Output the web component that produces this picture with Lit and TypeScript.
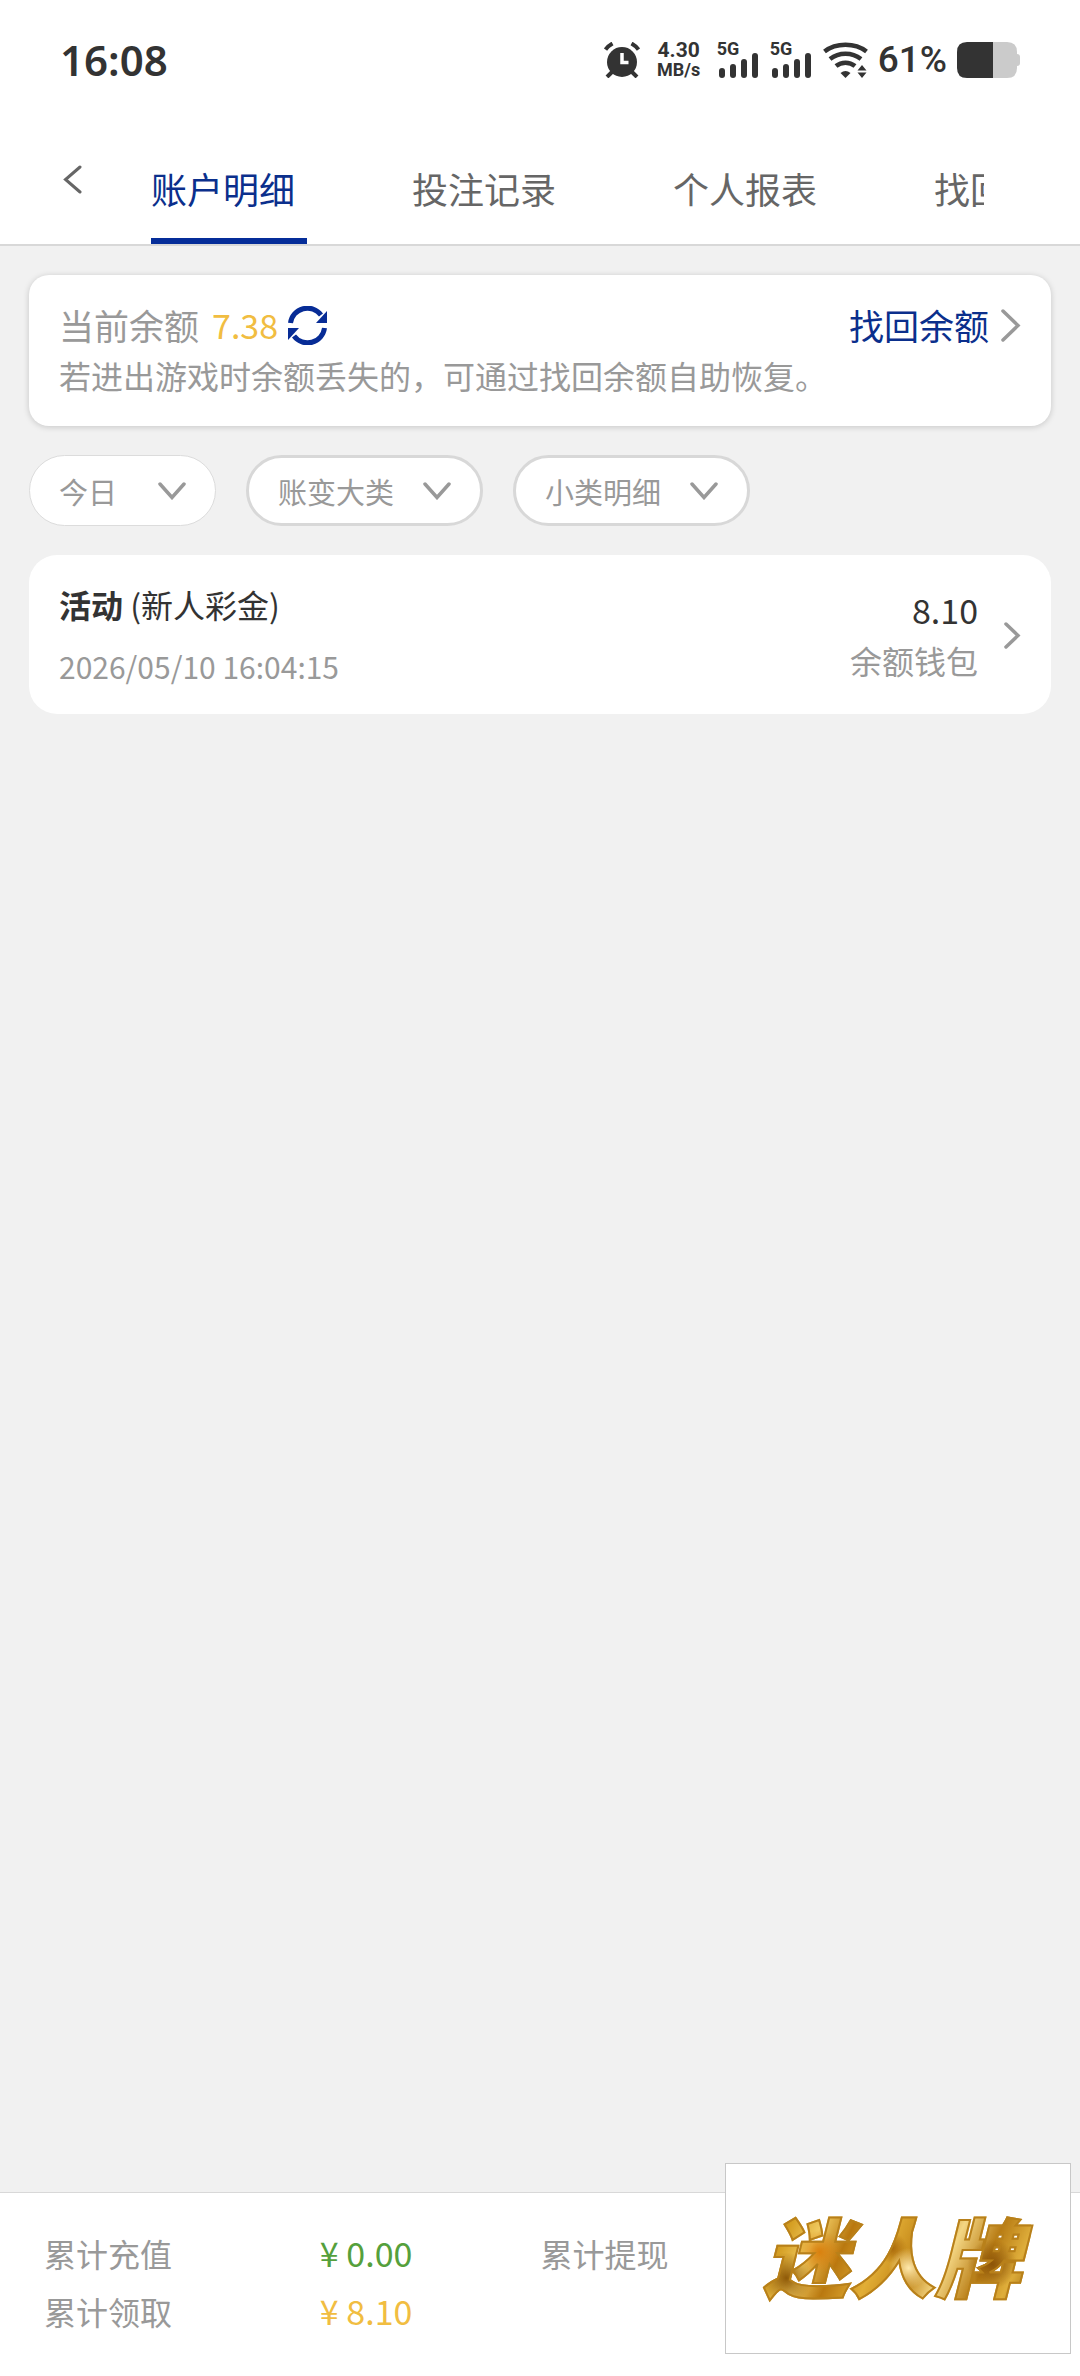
import { LitElement, html, css, svg } from 'lit';
import { customElement, property, state } from 'lit/decorators.js';

interface RecordItem {
  type: string;
  detail: string;
  time: string;
  amount: string;
  wallet: string;
}

const TABS = ['账户明细', '投注记录', '个人报表', '找回余额'];

const RECORDS: RecordItem[] = [
  { type: '活动', detail: '(新人彩金)', time: '2026/05/10 16:04:15', amount: '8.10', wallet: '余额钱包' },
];

const chevronRight = (width: number, height: number) => html`
  <svg width=${width} height=${height} viewBox="0 0 ${width} ${height}" fill="none" aria-hidden="true">
    <path
      d="M2 2L${width - 3} ${height / 2}L2 ${height - 2}"
      stroke="#999"
      stroke-width="3.5"
      stroke-linecap="round"
    />
  </svg>
`;

@customElement('status-bar')
export class StatusBar extends LitElement {
  static styles = css`
    :host {
      display: flex;
      align-items: center;
      justify-content: space-between;
      height: 120px;
      padding: 0 60px;
      background: #fff;
      color: #333;
      font-family: 'Noto Sans', Roboto, sans-serif;
      font-weight: 600;
    }

    svg {
      display: block;
    }

    .time {
      font-size: 42px;
      line-height: 48px;
    }

    .icons {
      display: flex;
      align-items: center;
    }

    .speed {
      display: flex;
      flex-direction: column;
      align-items: center;
      width: 48px;
      margin: 0 14px 0 15px;
      font-family: Roboto, sans-serif;
      font-size: 18px;
      font-weight: 700;
      line-height: 20px;
    }

    .speed__value {
      font-size: 21px;
    }

    .signal {
      display: grid;
      margin-right: 11px;
    }

    .signal > * {
      grid-area: 1 / 1;
    }

    .signal__label {
      font-family: Roboto, sans-serif;
      font-size: 18px;
      font-weight: 700;
      line-height: 14px;
    }

    .percent {
      margin: 0 10px;
      font-family: Roboto, 'Noto Sans', sans-serif;
      font-weight: 500;
      font-size: 37px;
      line-height: 40px;
    }
  `;

  private _signal() {
    return html`
      <span class="signal">
        <span class="signal__label">5G</span>
        <svg width="42" height="36" viewBox="0 0 42 36" fill="#333">
          <rect x="2" y="26" width="6" height="10" rx="3" />
          <rect x="13" y="22" width="6" height="14" rx="3" />
          <rect x="24" y="17" width="6" height="19" rx="3" />
          <rect x="35" y="11" width="6" height="25" rx="3" />
        </svg>
      </span>
    `;
  }

  render() {
    return html`
      <span class="time">16:08</span>
      <div class="icons">
        <svg width="36" height="36" viewBox="0 0 36 36" fill="none" stroke="#333" stroke-width="4">
          <circle cx="18" cy="20" r="15" fill="#333" stroke="none" />
          <path d="M1.500 7.500Q4 4 8.500 1.500M34.500 7.500Q32 4 27.500 1.500" />
          <path d="M8 30L3 35M28 30L33 35" />
          <path d="M18 11V20.500H24.500" stroke="#fff" stroke-width="3.500" />
        </svg>
        <span class="speed">
          <span class="speed__value">4.30</span>
          <span>MB/s</span>
        </span>
        ${this._signal()} ${this._signal()}
        <svg width="45" height="36" viewBox="0 0 45 36" fill="none" stroke="#333" stroke-width="4.500">
          <path d="M1.500 9.500C13 .5 32 .5 43.500 9.500" />
          <path d="M7 17C16 10 29 10 38 17" />
          <path d="M13 24C18.500 19.500 26.500 19.500 32 24" />
          <path d="M22.500 36L17.500 31Q22.500 27 27.500 31Z" fill="#333" stroke="none" />
          <path d="M39 23L43.500 28.500H34.500ZM39 36L34.500 30.500H43.500Z" fill="#333" stroke="none" />
        </svg>
        <span class="percent">61%</span>
        <svg width="63" height="36" viewBox="0 0 63 36">
          <path d="M36 0H50Q60 0 60 10V12Q63 12 63 15V21Q63 24 60 24V26Q60 36 50 36H36Z" fill="#cbcbcb" />
          <path d="M36 0H10Q0 0 0 10V26Q0 36 10 36H36Z" fill="#333" />
        </svg>
      </div>
    `;
  }
}

@customElement('filter-select')
export class FilterSelect extends LitElement {
  @property({ type: String }) label = '';
  @property({ type: Boolean, reflect: true }) active = false;

  static styles = css`
    :host {
      display: block;
    }

    .filter {
      display: grid;
      align-items: center;
      box-sizing: border-box;
      height: 71px;
      min-width: 187px;
      border: 3px solid #d8d8d8;
      border-radius: 36px;
      background: #fff;
    }

    :host([active]) .filter {
      border: 1px solid #dcdcdc;
    }

    .filter > * {
      grid-area: 1 / 1;
    }

    .filter__select {
      appearance: none;
      width: 100%;
      height: 100%;
      margin: 0;
      padding: 0 85px 0 29px;
      border: 0;
      background: transparent;
      color: #999;
      font: inherit;
      font-size: 29px;
    }

    .filter__arrow {
      justify-self: end;
      margin-right: 29px;
      pointer-events: none;
    }
  `;

  render() {
    return html`
      <div class="filter">
        <select class="filter__select" aria-label=${this.label}>
          <option>${this.label}</option>
        </select>
        <svg class="filter__arrow" width="28" height="18" viewBox="0 0 28 18" fill="none" aria-hidden="true">
          <path d="M2 2L14 15.500L26 2" stroke="#999" stroke-width="3.500" stroke-linecap="round" />
        </svg>
      </div>
    `;
  }
}

@customElement('app-root')
export class AppRoot extends LitElement {
  @state() private _tab = 0;

  static styles = css`
    :host {
      display: flex;
      flex-direction: column;
      min-height: 100vh;
      background: #f1f1f1;
      color: #999;
      font-family: 'Noto Sans CJK SC', 'Noto Sans', sans-serif;
      font-size: 32px;
    }

    svg {
      display: block;
      flex-shrink: 0;
    }

    button {
      margin: 0;
      padding: 0;
      border: 0;
      background: none;
      color: inherit;
      font: inherit;
      cursor: pointer;
    }

    /* ===== 顶部标签栏 ===== */
    .header {
      display: flex;
      height: 124px;
      padding-right: 96px;
      border-bottom: 2px solid #d8d8d8;
      background: #fff;
    }

    .header__back {
      display: flex;
      align-items: center;
      flex: 0 0 151px;
      box-sizing: border-box;
      padding: 0 0 6px 63px;
    }

    .tabs {
      display: flex;
      gap: 105px;
      min-width: 0;
      overflow: hidden;
    }

    .tabs__item {
      flex: 0 0 156px;
      box-sizing: border-box;
      padding-top: 18px;
      border-bottom: 6px solid transparent;
      color: #666;
      font-size: 36px;
      text-align: left;
      white-space: nowrap;
    }

    .tabs__item[aria-selected='true'] {
      border-color: #052d99;
      color: #0b2f8c;
    }

    .main {
      display: flex;
      flex: 1;
      flex-direction: column;
      gap: 29px;
      padding: 29px;
    }

    /* ===== 余额卡片 ===== */
    .balance {
      padding: 25px 30px 26px;
      border-radius: 20px;
      background: #fff;
      box-shadow: 0 1px 6px rgba(0, 0, 0, 0.18);
      line-height: 50px;
    }

    .balance__row {
      display: flex;
      align-items: center;
      height: 50px;
      font-size: 35px;
    }

    .balance__amount {
      margin: 0 10px 0 13px;
      color: #f1bd41;
      font-size: 34px;
    }

    .balance__link {
      display: flex;
      align-items: center;
      gap: 12px;
      margin-left: auto;
      color: #0b2f8c;
      text-decoration: none;
    }

    .balance__tip {
      margin: 0;
    }

    .filters {
      display: flex;
      gap: 30px;
    }

    /* ===== 账变记录 ===== */
    .record {
      display: flex;
      align-items: center;
      padding: 18px 30px 17px;
      border-radius: 28px;
      background: #fff;
      color: inherit;
      text-decoration: none;
    }

    .record__info {
      flex: 1;
      line-height: 62px;
    }

    .record__title {
      color: #333;
    }

    .record__time {
      font-size: 30px;
    }

    .record__value {
      margin-right: 26px;
      line-height: 51px;
      text-align: right;
    }

    .record__amount {
      color: #333;
      font-size: 34px;
    }

    /* ===== 底部累计 ===== */
    .totals {
      display: grid;
      grid-template-columns: 5fr 4fr 5fr 4fr;
      padding: 31px 43px 36px 44px;
      border-top: 1px solid #d8d8d8;
      background: #fff;
      line-height: 58px;
    }

    .totals__value {
      font-size: 34px;
    }

    .totals__value--in {
      color: #55a03c;
    }

    .totals__value--bonus {
      grid-column: 2;
      color: #f1bd41;
    }

    .totals__label--bonus {
      grid-row: 2;
    }

    /* 浮动广告牌，盖在底部累计之上 */
    .float {
      position: fixed;
      right: 9px;
      bottom: 22px;
      display: flex;
      align-items: center;
      justify-content: center;
      width: 346px;
      height: 191px;
      box-sizing: border-box;
      padding: 0 12px 10px 0;
      border: 1px solid #c8c8c8;
      background: #fff;
      text-decoration: none;
    }

    .float__text {
      padding: 0 10px;
      background:
        radial-gradient(circle at 24% 48%, #d9800e, transparent 10%),
        radial-gradient(circle at 12% 74%, #8f5a08, transparent 10%),
        radial-gradient(circle at 56% 64%, #ffe9ac, transparent 12%),
        radial-gradient(circle at 50% 44%, #a8680a, transparent 10%),
        radial-gradient(circle at 86% 60%, #8c5408, transparent 10%),
        linear-gradient(115deg, #a06c0c 4%, #d39c1f 14%, #f0c95f 24%, #b9780f 34%, #e2ae36 46%, #bf8214 58%, #f4d683 68%, #b87c14 80%, #dfae3b 90%, #9a640a);
      background-clip: text;
      -webkit-background-clip: text;
      -webkit-text-stroke: 2px #b8801a;
      color: transparent;
      font-size: 86px;
      font-style: italic;
      font-weight: 900;
      line-height: 100px;
      white-space: nowrap;
    }
  `;

  private _renderTab(label: string, index: number) {
    return html`
      <button
        class="tabs__item"
        role="tab"
        aria-selected=${this._tab === index ? 'true' : 'false'}
        @click=${() => (this._tab = index)}
      >${label}</button>
    `;
  }

  private _renderRecord(item: RecordItem) {
    return html`
      <a class="record" href="#">
        <div class="record__info">
          <div class="record__title"><b>${item.type}</b> ${item.detail}</div>
          <div class="record__time">${item.time}</div>
        </div>
        <div class="record__value">
          <div class="record__amount">${item.amount}</div>
          <div>${item.wallet}</div>
        </div>
        ${chevronRight(17, 27)}
      </a>
    `;
  }

  render() {
    const arrow = svg`
      <path d="M2.500 17A17 17 0 0 1 33 9" fill="none" stroke="#072c96" stroke-width="5" />
      <path d="M39 5V17H28Z" fill="#072c96" />
    `;

    return html`
      <status-bar></status-bar>
      <header class="header">
        <button class="header__back" aria-label="返回">
          <svg width="19" height="29" viewBox="0 0 19 29" fill="none" aria-hidden="true">
            <path d="M17 2L2.500 14.500L17 27" stroke="#666" stroke-width="3" stroke-linecap="round" />
          </svg>
        </button>
        <div class="tabs" role="tablist">${TABS.map((label, i) => this._renderTab(label, i))}</div>
      </header>

      <main class="main">
        <section class="balance">
          <div class="balance__row">
            <span>当前余额</span>
            <span class="balance__amount">7.38</span>
            <button class="balance__refresh" aria-label="刷新">
              <svg width="39" height="39" viewBox="0 0 39 39" aria-hidden="true">
                ${arrow}
                <g transform="rotate(180 19.500 19.500)">${arrow}</g>
              </svg>
            </button>
            <a class="balance__link" href="#">找回余额 ${chevronRight(20, 33)}</a>
          </div>
          <p class="balance__tip">若进出游戏时余额丢失的，可通过找回余额自助恢复。</p>
        </section>

        <div class="filters">
          <filter-select label="今日" active></filter-select>
          <filter-select label="账变大类"></filter-select>
          <filter-select label="小类明细"></filter-select>
        </div>

        ${RECORDS.map((item) => this._renderRecord(item))}
      </main>

      <footer class="totals">
        <span>累计充值</span>
        <span class="totals__value totals__value--in">¥ 0.00</span>
        <span>累计提现</span>
        <span class="totals__label--bonus">累计领取</span>
        <span class="totals__value totals__value--bonus">¥ 8.10</span>
      </footer>

      <a class="float" href="#"><span class="float__text">迷人牌</span></a>
    `;
  }
}

declare global {
  interface HTMLElementTagNameMap {
    'app-root': AppRoot;
    'status-bar': StatusBar;
    'filter-select': FilterSelect;
  }
}
